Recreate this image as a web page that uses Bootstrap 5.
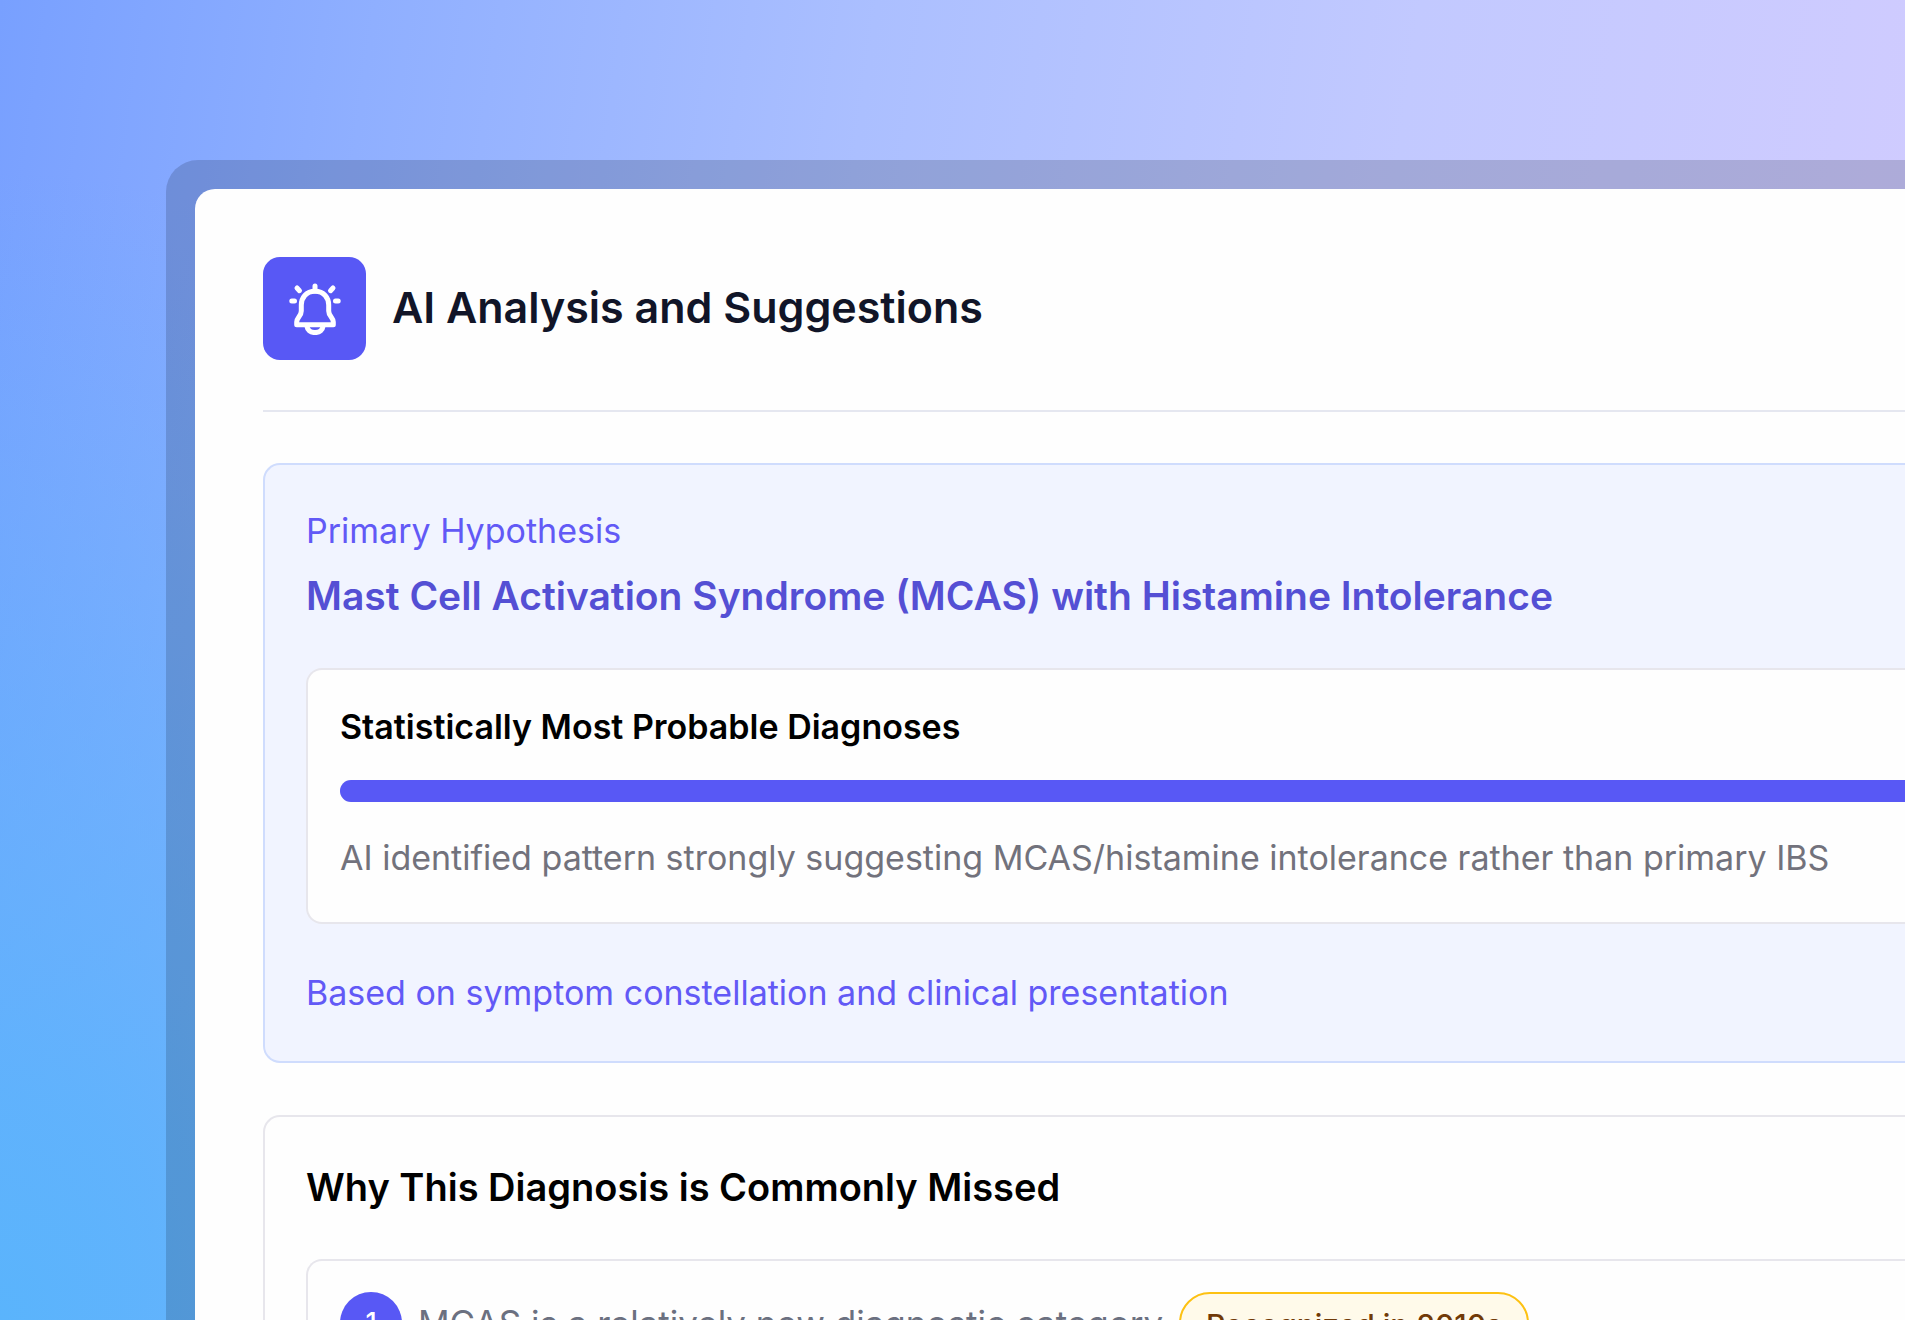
<!DOCTYPE html>
<html lang="en">
<head>
<meta charset="utf-8">
<meta name="viewport" content="width=device-width, initial-scale=1">
<title>AI Analysis and Suggestions</title>
<link href="https://cdn.jsdelivr.net/npm/bootstrap@5.3.0/dist/css/bootstrap.min.css" rel="stylesheet">
<style>
  :root { --accent: #5858f5; --accent-deep: #544fd4; --line: #e7e6ec; }
  body { font-family: Inter, "Liberation Sans", sans-serif; color: #000; }
  .stage {
    padding: 160px 0 0 166px;
    background:
      radial-gradient(ellipse 900px 1150px at 0 100%, #5ab4fc 0%, rgba(90,180,252,.85) 20%, rgba(90,180,252,0) 100%),
      linear-gradient(98deg, #78a0ff 0%, #8fafff 18%, #abbfff 42%, #c2c9ff 68%, #d3ccff 100%);
  }
  .glass-frame { padding: 29px 0 0 29px; border-radius: 32px 0 0 0; background: rgba(0,4,20,.16); }
  .sheet { padding: 68px 0 0 68px; border-radius: 20px 0 0 0; background: #fefefe; }
  .sheet-head { gap: 26px; padding-bottom: 50px; border-bottom: 2px solid #e5e7f0; margin-bottom: 51px; }
  .icon-tile { width: 103px; height: 103px; border-radius: 17px; background: var(--accent); }
  .sheet-title { font-size: 43px; line-height: 60px; font-weight: 600; color: #111528; }
  .panel { padding: 40px 0 42px 41px; border: 2px solid var(--line); border-right: 0; border-radius: 17px 0 0 17px; margin-bottom: 52px; }
  .panel-tint { background: #f1f4ff; border-color: #cfdcfd; }
  .inset { padding: 31px 0 38px 32px; border: 2px solid var(--line); border-right: 0; border-radius: 16px 0 0 16px; background: #fefefe; }
  .copy { font-size: 34px; line-height: 52px; }
  .copy-accent { color: #6259f6; }
  .copy-muted { color: #72727c; }
  .panel-title { font-size: 38px; line-height: 60px; font-weight: 600; margin-bottom: 42px; }
  .panel-title-accent { font-size: 39px; color: var(--accent-deep); margin-top: 9px; }
  .meter { height: 22px; border-radius: 11px 0 0 11px; margin: 27px 0 30px; background: #e5e7f0; }
  .meter .progress-bar { background: var(--accent); }
  .source-note { margin-top: 43px; }
  .reason { gap: 16px; }
  .step { width: 62px; height: 62px; background: var(--accent); font-size: 27px; font-weight: 500; }
  .reason .copy { font-size: 35px; color: #6b7080; }
  .tag { height: 62px; padding: 4px 25px 0; border: 2px solid #fdc112; background: #fffaea; color: #713a08; font-size: 30px; font-weight: 500; }
</style>
</head>
<body>
<main class="stage vh-100 overflow-hidden">
  <div class="glass-frame">
    <div class="sheet">
      <header class="sheet-head d-flex align-items-center">
        <span class="icon-tile d-flex align-items-center justify-content-center flex-shrink-0">
          <svg width="52" height="52" viewBox="0 0 52 52" fill="none" stroke="#fff" stroke-width="5" stroke-linecap="round" stroke-linejoin="round" aria-hidden="true">
            <path d="M26 8.300C17 8.300 12.300 15 12.300 22V28C12.300 33.500 7.700 34.500 7.700 39V41.700H44.300V39C44.300 34.500 39.700 33.500 39.700 28V22C39.700 15 35 8.300 26 8.300Z"/>
            <path d="M26 3V8"/>
            <path d="M17.700 42.500C18.300 47 21.500 49.600 26 49.600S33.700 47 34.300 42.500"/>
            <path d="M8 5L10.500 7.700M44 5L41.500 7.700M2.800 18H5.500M46.500 18H49.200"/>
          </svg>
        </span>
        <h1 class="sheet-title mb-1">AI Analysis and Suggestions</h1>
      </header>

      <section class="panel panel-tint">
        <p class="copy copy-accent mb-0">Primary Hypothesis</p>
        <h2 class="panel-title panel-title-accent">Mast Cell Activation Syndrome (MCAS) with Histamine Intolerance</h2>
        <div class="inset">
          <h3 class="copy fw-semibold mb-0" id="probable">Statistically Most Probable Diagnoses</h3>
          <div class="progress meter" role="progressbar" aria-labelledby="probable" aria-valuenow="100" aria-valuemin="0" aria-valuemax="100">
            <div class="progress-bar w-100"></div>
          </div>
          <p class="copy copy-muted mb-0">AI identified pattern strongly suggesting MCAS/histamine intolerance rather than primary IBS</p>
        </div>
        <p class="copy copy-accent source-note mb-0">Based on symptom constellation and clinical presentation</p>
      </section>

      <section class="panel">
        <h2 class="panel-title">Why This Diagnosis is Commonly Missed</h2>
        <div class="inset">
          <div class="reason d-flex align-items-center">
            <span class="step rounded-circle text-white d-flex align-items-center justify-content-center flex-shrink-0">1</span>
            <span class="copy">MCAS is a relatively new diagnostic category</span>
            <span class="tag rounded-pill d-flex align-items-center">Recognized in 2010s</span>
          </div>
        </div>
      </section>
    </div>
  </div>
</main>
<script src="https://cdn.jsdelivr.net/npm/bootstrap@5.3.0/dist/js/bootstrap.bundle.min.js"></script>
</body>
</html>
